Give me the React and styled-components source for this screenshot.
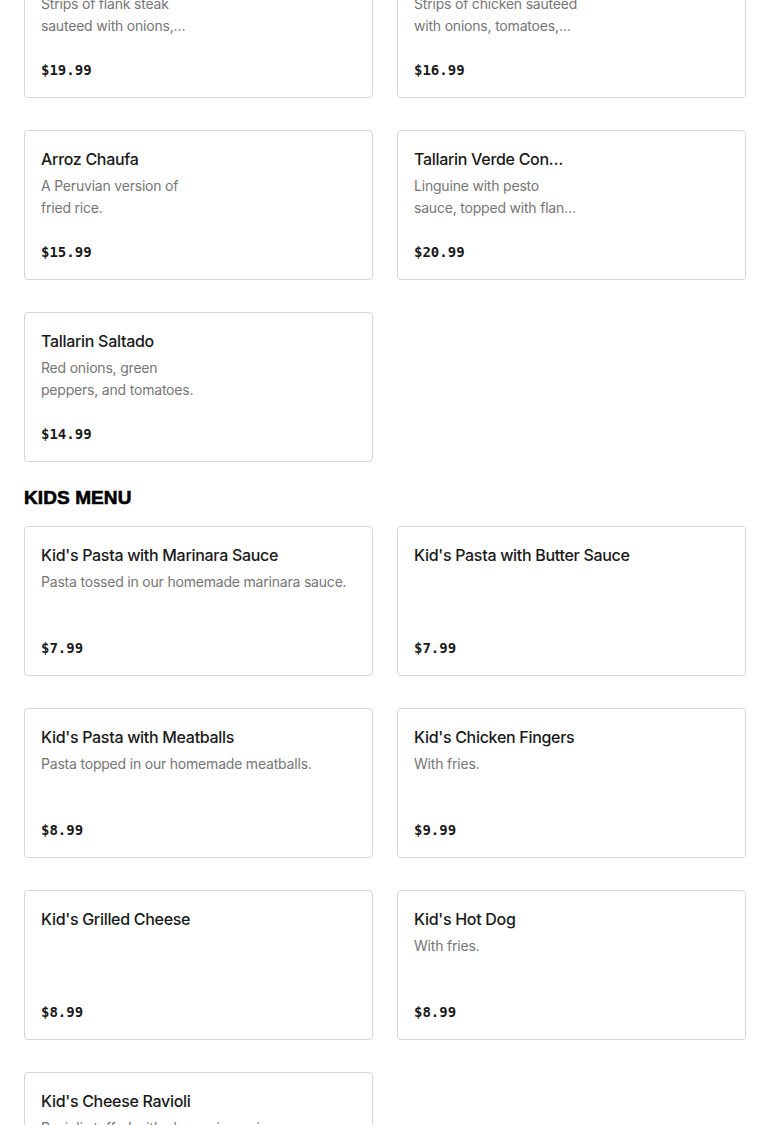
import React from "react";
import styled, { createGlobalStyle } from "styled-components";

const GlobalStyle = createGlobalStyle`
  html, body { margin: 0; padding: 0; background: #ffffff; }
  body { font-family: Inter, "Noto Sans", sans-serif; color: #191919; overflow: hidden; }
  * { box-sizing: border-box; }
`;

const Page = styled.main`
  padding: 0 24px;
  margin-top: -52px;
`;

const Section = styled.section`
  & + & { margin-top: 24px; }
`;

const SectionTitle = styled.h2`
  margin: 0 0 16px;
  font-family: "Liberation Sans", Arial, sans-serif;
  font-weight: 900;
  font-size: 19px;
  line-height: 24px;
  letter-spacing: 0.1px;
  text-transform: uppercase;
  color: #000;
  -webkit-text-stroke: 0.6px #000;
`;

const Grid = styled.div`
  display: grid;
  grid-template-columns: 1fr 1fr;
  column-gap: 24px;
  row-gap: 32px;
`;

const Card = styled.article`
  height: 150px;
  border: 1px solid #d6d6d6;
  border-radius: 4px;
  padding: 16px;
  display: flex;
  flex-direction: column;
  background: #fff;
`;

const Title = styled.h3`
  margin: 0;
  font-size: 16px;
  line-height: 24px;
  font-weight: 550;
  letter-spacing: -0.3px;
  color: #191919;
  white-space: nowrap;
  overflow: hidden;
  text-overflow: ellipsis;
  max-width: ${(p) => (p.$narrow ? "152px" : "100%")};
`;

const Desc = styled.p`
  margin: 4px 0 0;
  font-size: 14px;
  line-height: 22px;
  letter-spacing: -0.2px;
  color: #767676;
  display: -webkit-box;
  -webkit-box-orient: vertical;
  -webkit-line-clamp: 2;
  overflow: hidden;
  max-width: ${(p) => (p.$narrow ? "166px" : "100%")};
`;

const Price = styled.div`
  margin-top: auto;
  font-family: "DejaVu Sans Mono", "Liberation Mono", monospace;
  font-weight: 700;
  font-size: 14px;
  line-height: 22px;
  color: #191919;
`;

const mains = [
  { name: "Lomo Saltado", desc: "Strips of flank steak sauteed with onions, tomatoes, and fries.", price: "$19.99" },
  { name: "Pollo Saltado", desc: "Strips of chicken sauteed with onions, tomatoes, and fries.", price: "$16.99" },
  { name: "Arroz Chaufa", desc: "A Peruvian version of fried rice.", price: "$15.99" },
  { name: "Tallarin Verde Con Bistec", desc: "Linguine with pesto sauce, topped with flank steak.", price: "$20.99" },
  { name: "Tallarin Saltado", desc: "Red onions, green peppers, and tomatoes.", price: "$14.99" },
];

const kids = [
  { name: "Kid's Pasta with Marinara Sauce", desc: "Pasta tossed in our homemade marinara sauce.", price: "$7.99" },
  { name: "Kid's Pasta with Butter Sauce", desc: "", price: "$7.99" },
  { name: "Kid's Pasta with Meatballs", desc: "Pasta topped in our homemade meatballs.", price: "$8.99" },
  { name: "Kid's Chicken Fingers", desc: "With fries.", price: "$9.99" },
  { name: "Kid's Grilled Cheese", desc: "", price: "$8.99" },
  { name: "Kid's Hot Dog", desc: "With fries.", price: "$8.99" },
  { name: "Kid's Cheese Ravioli", desc: "Ravioli stuffed with cheese in marinara sauce.", price: "$8.99" },
];

function Item({ item, narrow }) {
  return (
    <Card>
      <Title $narrow={narrow}>{item.name}</Title>
      {item.desc && <Desc $narrow={narrow}>{item.desc}</Desc>}
      <Price>{item.price}</Price>
    </Card>
  );
}

export default function App() {
  return (
    <>
      <GlobalStyle />
      <Page>
        <Section>
          <Grid>
            {mains.map((m) => (
              <Item key={m.name} item={m} narrow />
            ))}
          </Grid>
        </Section>
        <Section>
          <SectionTitle>Kids Menu</SectionTitle>
          <Grid>
            {kids.map((m) => (
              <Item key={m.name} item={m} />
            ))}
          </Grid>
        </Section>
      </Page>
    </>
  );
}
